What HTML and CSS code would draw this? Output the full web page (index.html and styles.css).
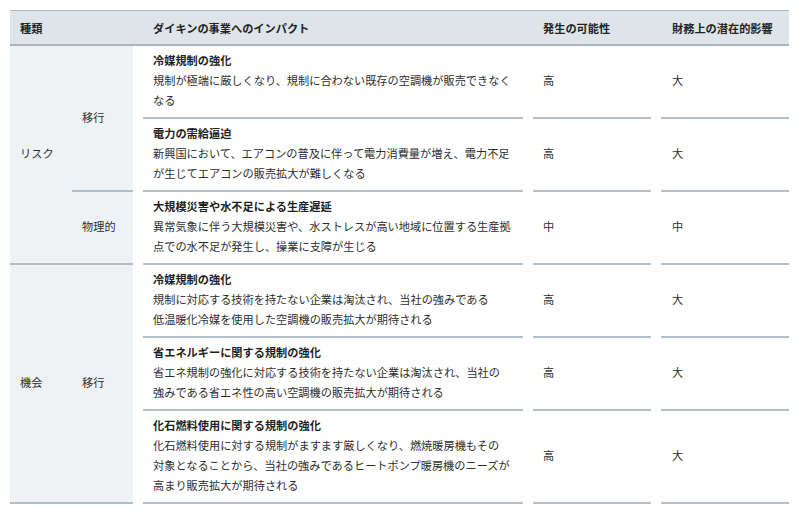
FILE: index.html
```html
<!DOCTYPE html>
<html lang="ja">
<head>
<meta charset="utf-8">
<title>リスクと機会</title>
<link rel="stylesheet" href="styles.css">
</head>
<body>
<table class="tbl">
  <colgroup>
    <col class="w1"><col class="w2"><col class="w3"><col class="w4"><col class="w5">
  </colgroup>
  <thead>
    <tr>
      <th colspan="2" class="h-type">種類</th>
      <th class="h-impact">ダイキンの事業へのインパクト</th>
      <th class="h-val">発生の可能性</th>
      <th class="h-val2">財務上の潜在的影響</th>
    </tr>
  </thead>
  <tbody>
    <tr>
      <td rowspan="3" class="side side1">リスク</td>
      <td rowspan="2" class="side side2">移行</td>
      <td class="impact"><div class="ttl">冷媒規制の強化</div><div class="desc">規制が極端に厳しくなり、規制に合わない既存の空調機が販売できなく<br>なる</div></td>
      <td class="val">高</td>
      <td class="val val2">大</td>
    </tr>
    <tr>
      <td class="impact"><div class="ttl">電力の需給逼迫</div><div class="desc">新興国において、エアコンの普及に伴って電力消費量が増え、電力不足<br>が生じてエアコンの販売拡大が難しくなる</div></td>
      <td class="val">高</td>
      <td class="val val2">大</td>
    </tr>
    <tr>
      <td class="side side2">物理的</td>
      <td class="impact"><div class="ttl">大規模災害や水不足による生産遅延</div><div class="desc">異常気象に伴う大規模災害や、水ストレスが高い地域に位置する生産拠<br>点での水不足が発生し、操業に支障が生じる</div></td>
      <td class="val">中</td>
      <td class="val val2">中</td>
    </tr>
    <tr>
      <td rowspan="3" class="side side1">機会</td>
      <td rowspan="3" class="side side2">移行</td>
      <td class="impact"><div class="ttl">冷媒規制の強化</div><div class="desc">規制に対応する技術を持たない企業は淘汰され、当社の強みである<br>低温暖化冷媒を使用した空調機の販売拡大が期待される</div></td>
      <td class="val">高</td>
      <td class="val val2">大</td>
    </tr>
    <tr>
      <td class="impact"><div class="ttl">省エネルギーに関する規制の強化</div><div class="desc">省エネ規制の強化に対応する技術を持たない企業は淘汰され、当社の<br>強みである省エネ性の高い空調機の販売拡大が期待される</div></td>
      <td class="val">高</td>
      <td class="val val2">大</td>
    </tr>
    <tr>
      <td class="impact"><div class="ttl">化石燃料使用に関する規制の強化</div><div class="desc">化石燃料使用に対する規制がますます厳しくなり、燃焼暖房機もその<br>対象となることから、当社の強みであるヒートポンプ暖房機のニーズが<br>高まり販売拡大が期待される</div></td>
      <td class="val">高</td>
      <td class="val val2">大</td>
    </tr>
  </tbody>
</table>
</body>
</html>
```
FILE: styles.css
```css
html, body {
  margin: 0;
  padding: 0;
  background: #ffffff;
}
body {
  padding: 10px 0 0 10px;
  font-family: "Noto Sans CJK JP", "Noto Sans", sans-serif;
  font-size: 11.2px;
  color: #2e2e2e;
}
.tbl {
  border-collapse: separate;
  border-spacing: 0;
  table-layout: fixed;
  width: 779px;
}
.w1 { width: 62px; }
.w2 { width: 61px; }
.w3 { width: 390px; }
.w4 { width: 128px; }
.w5 { width: 138px; }

thead th {
  background: #dde4ea;
  border-top: 1px solid #a9b6c0;
  border-bottom: 2px solid #a9b6c0;
  height: 33px;
  padding: 0;
  text-align: left;
  font-weight: 700;
  color: #222222;
  line-height: 20px;
  vertical-align: middle;
  white-space: nowrap;
}
.h-type { padding-left: 10px; }
.h-impact { padding-left: 20px; }
.h-val { padding-left: 20px; }
.h-val2 { padding-left: 21px; }

tbody td {
  padding: 4px 0 9px 0;
  line-height: 20px;
  vertical-align: middle;
  text-align: left;
  white-space: nowrap;
  background-image: linear-gradient(#b3bec6, #b3bec6);
  background-repeat: no-repeat;
  background-position: right bottom;
  background-size: calc(100% - 10px) 2px;
}
.side {
  background-color: #eef2f5;
  background-size: 100% 2px;
}
.side1 { padding-left: 10px; }
.side2 { padding-left: 10px; }
.impact {
  padding-left: 20px;
  vertical-align: top;
}
.ttl {
  font-weight: 700;
  color: #1f1f1f;
}
.desc {
  color: #2e2e2e;
}
.val { padding-left: 20px; }
.val2 { padding-left: 21px; }
```
